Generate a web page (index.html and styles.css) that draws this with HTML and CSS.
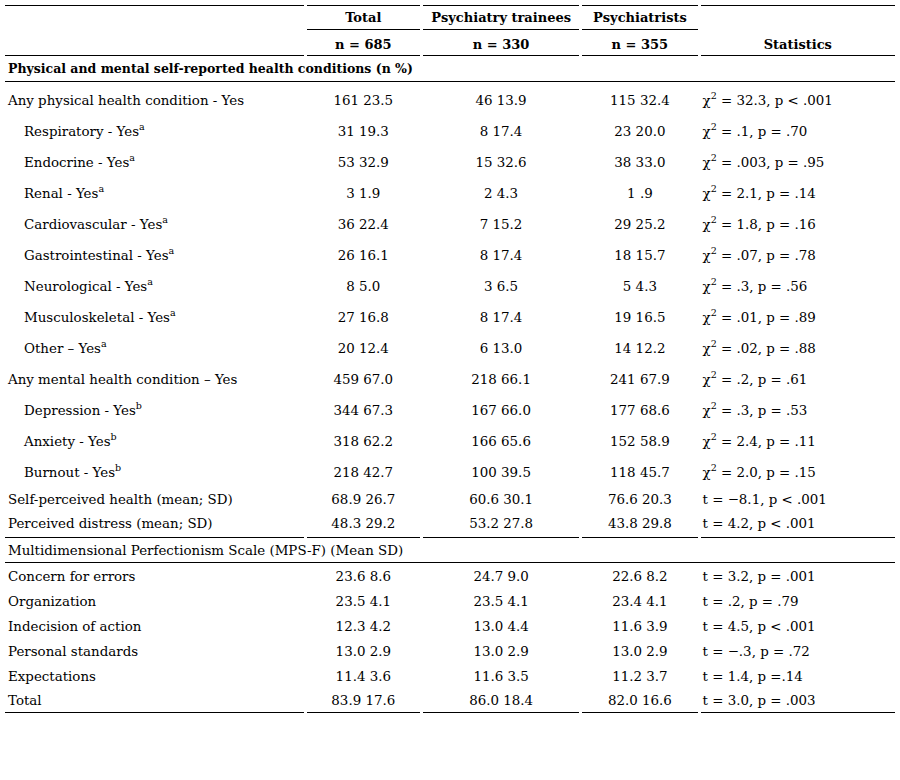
FILE: index.html
```html
<!DOCTYPE html>
<html>
<head>
<meta charset="utf-8">
<link rel="stylesheet" href="styles.css">
</head>
<body>
<table class="data">
  <colgroup>
    <col class="c-label">
    <col class="c-total">
    <col class="c-train">
    <col class="c-psy">
    <col class="c-stat">
  </colgroup>
  <thead>
    <tr class="h1">
      <th rowspan="2" class="top bottom"></th>
      <th class="top bottom">Total</th>
      <th class="top bottom">Psychiatry trainees</th>
      <th class="top bottom">Psychiatrists</th>
      <th rowspan="2" class="top bottom stat-head">Statistics</th>
    </tr>
    <tr class="h2">
      <th class="bottom">n = 685</th>
      <th class="bottom">n = 330</th>
      <th class="bottom">n = 355</th>
    </tr>
  </thead>
  <tbody>
    <tr class="section">
      <td colspan="5" class="bottom bold">Physical and mental self-reported health conditions (n %)</td>
    </tr>
    <tr class="tall"><td class="label">Any physical health condition - Yes</td><td class="num">161 23.5</td><td class="num">46 13.9</td><td class="num">115 32.4</td><td class="stat">χ<sup>2</sup> = 32.3, p &lt; .001</td></tr>
    <tr class="tall"><td class="label sub">Respiratory - Yes<sup>a</sup></td><td class="num">31 19.3</td><td class="num">8 17.4</td><td class="num">23 20.0</td><td class="stat">χ<sup>2</sup> = .1, p = .70</td></tr>
    <tr class="tall"><td class="label sub">Endocrine - Yes<sup>a</sup></td><td class="num">53 32.9</td><td class="num">15 32.6</td><td class="num">38 33.0</td><td class="stat">χ<sup>2</sup> = .003, p = .95</td></tr>
    <tr class="tall"><td class="label sub">Renal - Yes<sup>a</sup></td><td class="num">3 1.9</td><td class="num">2 4.3</td><td class="num">1 .9</td><td class="stat">χ<sup>2</sup> = 2.1, p = .14</td></tr>
    <tr class="tall"><td class="label sub">Cardiovascular - Yes<sup>a</sup></td><td class="num">36 22.4</td><td class="num">7 15.2</td><td class="num">29 25.2</td><td class="stat">χ<sup>2</sup> = 1.8, p = .16</td></tr>
    <tr class="tall"><td class="label sub">Gastrointestinal - Yes<sup>a</sup></td><td class="num">26 16.1</td><td class="num">8 17.4</td><td class="num">18 15.7</td><td class="stat">χ<sup>2</sup> = .07, p = .78</td></tr>
    <tr class="tall"><td class="label sub">Neurological - Yes<sup>a</sup></td><td class="num">8 5.0</td><td class="num">3 6.5</td><td class="num">5 4.3</td><td class="stat">χ<sup>2</sup> = .3, p = .56</td></tr>
    <tr class="tall"><td class="label sub">Musculoskeletal - Yes<sup>a</sup></td><td class="num">27 16.8</td><td class="num">8 17.4</td><td class="num">19 16.5</td><td class="stat">χ<sup>2</sup> = .01, p = .89</td></tr>
    <tr class="tall"><td class="label sub">Other – Yes<sup>a</sup></td><td class="num">20 12.4</td><td class="num">6 13.0</td><td class="num">14 12.2</td><td class="stat">χ<sup>2</sup> = .02, p = .88</td></tr>
    <tr class="tall"><td class="label">Any mental health condition – Yes</td><td class="num">459 67.0</td><td class="num">218 66.1</td><td class="num">241 67.9</td><td class="stat">χ<sup>2</sup> = .2, p = .61</td></tr>
    <tr class="tall"><td class="label sub">Depression - Yes<sup>b</sup></td><td class="num">344 67.3</td><td class="num">167 66.0</td><td class="num">177 68.6</td><td class="stat">χ<sup>2</sup> = .3, p = .53</td></tr>
    <tr class="tall"><td class="label sub">Anxiety - Yes<sup>b</sup></td><td class="num">318 62.2</td><td class="num">166 65.6</td><td class="num">152 58.9</td><td class="stat">χ<sup>2</sup> = 2.4, p = .11</td></tr>
    <tr class="tall"><td class="label sub">Burnout - Yes<sup>b</sup></td><td class="num">218 42.7</td><td class="num">100 39.5</td><td class="num">118 45.7</td><td class="stat">χ<sup>2</sup> = 2.0, p = .15</td></tr>
    <tr class="r26"><td class="label">Self-perceived health (mean; SD)</td><td class="num">68.9 26.7</td><td class="num">60.6 30.1</td><td class="num">76.6 20.3</td><td class="stat">t = −8.1, p &lt; .001</td></tr>
    <tr class="r27"><td class="label bottom">Perceived distress (mean; SD)</td><td class="num bottom">48.3 29.2</td><td class="num bottom">53.2 27.8</td><td class="num bottom">43.8 29.8</td><td class="stat bottom">t = 4.2, p &lt; .001</td></tr>
    <tr class="section2">
      <td colspan="5" class="bottom">Multidimensional Perfectionism Scale (MPS-F) (Mean SD)</td>
    </tr>
    <tr><td class="label">Concern for errors</td><td class="num">23.6 8.6</td><td class="num">24.7 9.0</td><td class="num">22.6 8.2</td><td class="stat">t = 3.2, p = .001</td></tr>
    <tr><td class="label">Organization</td><td class="num">23.5 4.1</td><td class="num">23.5 4.1</td><td class="num">23.4 4.1</td><td class="stat">t = .2, p = .79</td></tr>
    <tr><td class="label">Indecision of action</td><td class="num">12.3 4.2</td><td class="num">13.0 4.4</td><td class="num">11.6 3.9</td><td class="stat">t = 4.5, p &lt; .001</td></tr>
    <tr><td class="label">Personal standards</td><td class="num">13.0 2.9</td><td class="num">13.0 2.9</td><td class="num">13.0 2.9</td><td class="stat">t = −.3, p = .72</td></tr>
    <tr><td class="label">Expectations</td><td class="num">11.4 3.6</td><td class="num">11.6 3.5</td><td class="num">11.2 3.7</td><td class="stat">t = 1.4, p =.14</td></tr>
    <tr><td class="label bottom">Total</td><td class="num bottom">83.9 17.6</td><td class="num bottom">86.0 18.4</td><td class="num bottom">82.0 16.6</td><td class="stat bottom">t = 3.0, p = .003</td></tr>
  </tbody>
</table>
</body>
</html>
```
FILE: styles.css
```css
html, body {
  margin: 0;
  padding: 0;
  background: #ffffff;
}
body {
  font-family: "DejaVu Serif", "Liberation Serif", serif;
  font-size: 13.4px;
  color: #000;
}
.data {
  margin: 5px 0 0 2px;
  width: 896px;
  table-layout: fixed;
  border-collapse: separate;
  border-spacing: 3px 0;
}
.c-label { width: 298px; }
.c-total { width: 113px; }
.c-train { width: 156px; }
.c-psy { width: 115px; }
.c-stat { width: 194px; }

th, td {
  padding: 0 0 4px 0;
  line-height: 15px;
  vertical-align: bottom;
  white-space: nowrap;
}
th {
  font-weight: bold;
  font-size: 13px;
  text-align: center;
  padding-bottom: 4px;
}
tr.h1 th { height: 25px; box-sizing: border-box; }
tr.h1 th.stat-head { padding-bottom: 3px; }
tr.h2 th { height: 26px; box-sizing: border-box; padding-bottom: 3px; }
.top { border-top: 1px solid #000; }
.bottom { border-bottom: 1px solid #000; }
.bold { font-weight: bold; font-size: 12.5px; }

tr.section td {
  height: 26px;
  box-sizing: border-box;
  padding-left: 3px;
  padding-bottom: 5px;
}
tr.section2 td {
  height: 25px;
  box-sizing: border-box;
  padding-left: 3px;
  padding-bottom: 4px;
}
tbody tr td { height: 25px; box-sizing: border-box; }
tbody tr.tall td { height: 31px; padding-bottom: 5px; }
tbody tr.r26 td { height: 26px; }
tbody tr.r27 td { height: 27px; padding-bottom: 6px; }

.label { padding-left: 3px; }
.label.sub { padding-left: 19px; }
.num { text-align: center; }
.stat { text-align: left; padding-left: 2px; }

sup {
  font-size: 9.5px;
  line-height: 0;
  vertical-align: 6px;
}
```
